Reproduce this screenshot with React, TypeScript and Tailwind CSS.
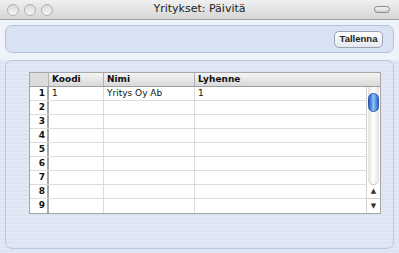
import React from 'react';

const rows = [1, 2, 3, 4, 5, 6, 7, 8, 9];

function TrafficLight() {
  return (
    <div className="w-[12px] h-[12px] rounded-full border border-[#b0b0b0] bg-gradient-to-b from-[#dadada] to-[#f6f6f6]" />
  );
}

function ScrollBar() {
  return (
    <div className="w-[14px] flex flex-col bg-white border-l border-[#d4d4d4]">
      <div className="flex-1 mx-[1px] rounded-b-[6px] bg-gradient-to-r from-[#e2e2e2] via-white to-[#e2e2e2] border-b border-[#c8c8c8] pt-[6px] flex justify-center">
        <div className="w-[11px] h-[19px] rounded-full bg-gradient-to-r from-[#1f5fc8] via-[#8fc0f5] to-[#2c6ad4] border border-[#2a59a8]" />
      </div>
      <div className="h-[14px] flex items-center justify-center text-[7px] text-[#333] border-b border-[#d0d0d0]">▲</div>
      <div className="h-[14px] flex items-center justify-center text-[7px] text-[#333]">▼</div>
    </div>
  );
}

export default function App() {
  return (
    <div
      className="w-[399px] h-[253px] overflow-hidden bg-[image:repeating-linear-gradient(180deg,#e3e8f4_0px,#e3e8f4_2px,#dde4f1_2px,#dde4f1_4px)]"
      style={{ fontFamily: '"DejaVu Sans", "Liberation Sans", sans-serif' }}
    >
      <div className="h-[20px] flex items-center px-[7px] bg-gradient-to-b from-[#f0f0f0] to-[#d6d6d6] border-b border-[#a0a0a0]">
        <div className="w-[60px] flex gap-[5px]">
          <TrafficLight />
          <TrafficLight />
          <TrafficLight />
        </div>
        <div className="flex-1 text-center text-[11px] text-[#222]">Yritykset: Päivitä</div>
        <div className="w-[60px] flex justify-end">
          <div className="w-[16px] h-[7px] rounded-full border border-[#8a8a8a] bg-gradient-to-b from-[#f4f4f4] to-[#d0d0d0] mr-[2px]" />
        </div>
      </div>

      <div className="bg-[#eef2f9] h-[40px] px-[5px] pt-[5px]">
        <div className="h-[28px] rounded-[7px] border border-[#b3c2dc] bg-[#d9e2f3] flex items-center justify-end pr-[10px]">
          <button className="h-[17px] w-[49px] rounded-[5px] border border-[#9aa3b0] bg-gradient-to-b from-white to-[#e4e8ee] text-[9.5px] font-bold text-[#222] leading-none font-['Liberation_Sans',sans-serif]">
            Tallenna
          </button>
        </div>
      </div>

      <div className="px-[5px]">
        <div className="h-[189px] rounded-[7px] border border-[#b9c6de] pl-[23px] pt-[11px]">
          <div className="w-[352px] border border-[#a6a6a6] bg-white">
            <div className="flex h-[14px] bg-gradient-to-b from-[#f4f4f4] to-[#d9d9d9] border-b border-[#9e9e9e] text-[9px] font-bold text-[#111]">
              <div className="w-[19px] border-r border-[#b0b0b0] bg-[#dcdcdc]" />
              <div className="w-[55px] border-r border-[#b0b0b0] pl-[3px] leading-[13px]">Koodi</div>
              <div className="w-[91px] border-r border-[#b0b0b0] pl-[3px] leading-[13px]">Nimi</div>
              <div className="flex-1 pl-[3px] leading-[13px]">Lyhenne</div>
            </div>
            <div className="flex">
              <div className="flex-1">
                {rows.map((n) => (
                  <div key={n} className="flex h-[14px] border-b border-[#dcdcdc] last:border-b-0 text-[9px] text-[#111] leading-[13px]">
                    <div className="w-[19px] border-r-2 border-[#a8a8a8] text-right pr-[2px] font-bold">{n}</div>
                    <div className="w-[55px] border-r border-[#dcdcdc] pl-[3px]">{n === 1 ? '1' : ''}</div>
                    <div className="w-[91px] border-r border-[#dcdcdc] pl-[3px]">{n === 1 ? 'Yritys Oy Ab' : ''}</div>
                    <div className="flex-1 pl-[3px]">{n === 1 ? '1' : ''}</div>
                  </div>
                ))}
              </div>
              <ScrollBar />
            </div>
          </div>
        </div>
      </div>
    </div>
  );
}
